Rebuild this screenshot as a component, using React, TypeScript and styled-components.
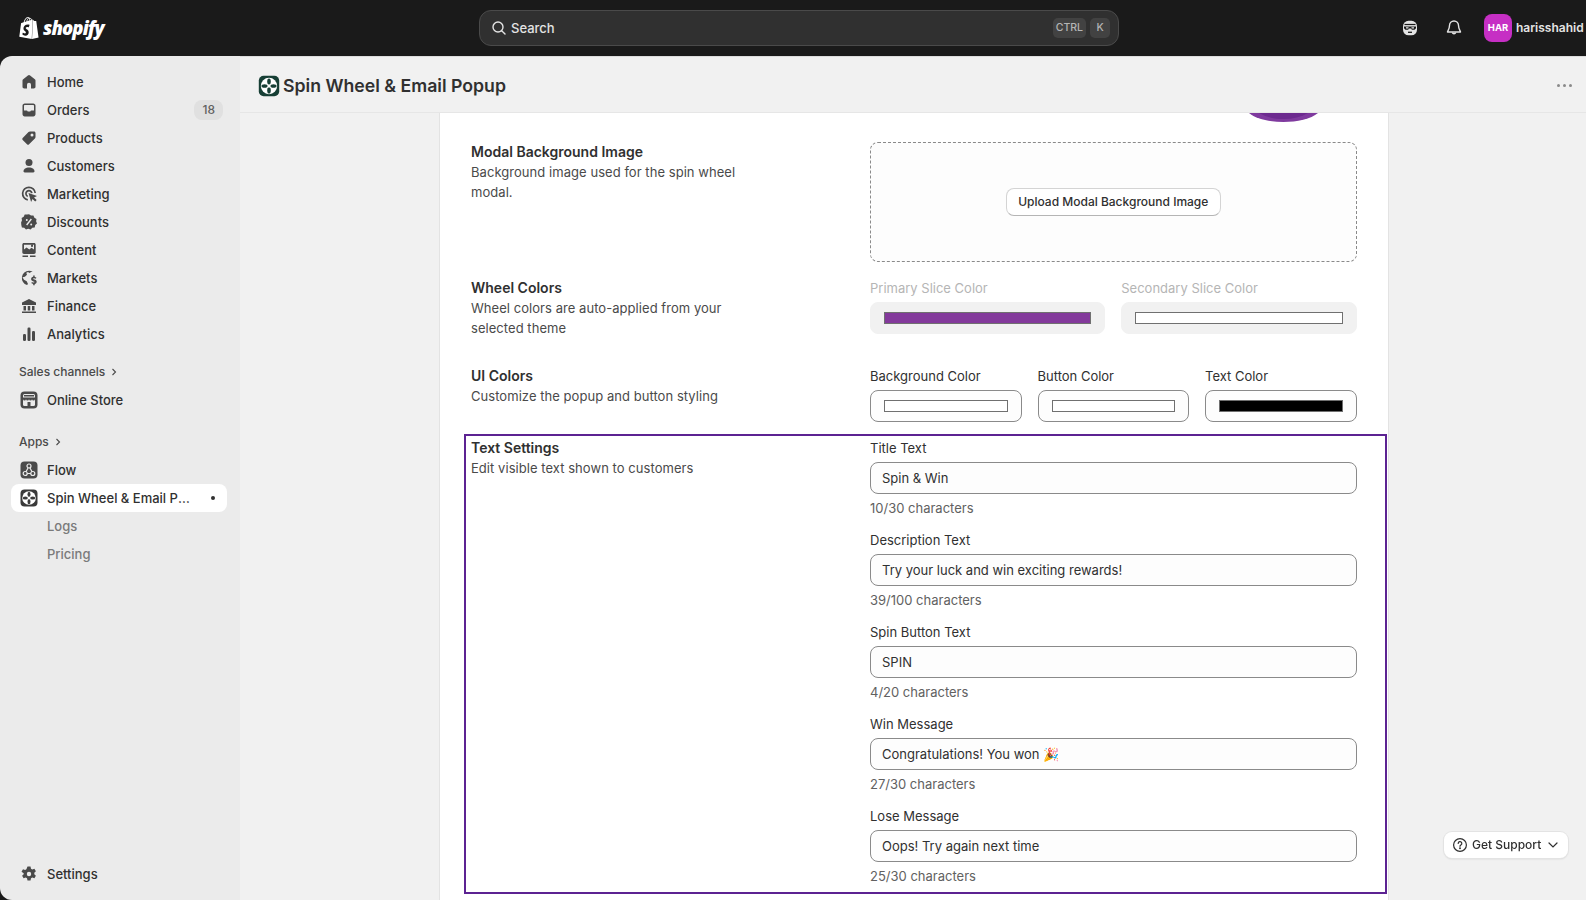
import React from 'react'
import styled, { createGlobalStyle } from 'styled-components'
import { SiShopify } from 'react-icons/si'

const GlobalStyle = createGlobalStyle`
  html, body {
    margin: 0;
    height: 100%;
    background: #1a1a1a;
    overflow: hidden;
  }
  * { box-sizing: border-box; }
  body {
    font-family: Inter, "Liberation Sans", sans-serif;
    font-size: 13px;
    line-height: 20px;
    color: #303030;
  }
`

const Frame = styled.div`
  width: 1586px;
  height: 900px;
  display: flex;
  flex-direction: column;
  overflow: hidden;
`

/* top bar */
const TopBar = styled.header`
  height: 56px;
  flex: none;
  display: flex;
  align-items: center;
  background: #1a1a1a;
`

const LogoBox = styled.div`
  width: 479px;
  flex: none;
  display: flex;
  align-items: center;
  gap: 3px;
  padding-left: 18px;
  color: #fff;
`

const Wordmark = styled.span`
  font-family: "Open Sans", sans-serif;
  font-style: italic;
  font-weight: 800;
  font-size: 18.5px;
  letter-spacing: -0.9px;
  color: #fff;
`

const SearchBox = styled.div`
  width: 640px;
  height: 36px;
  flex: none;
  display: flex;
  align-items: center;
  gap: 4px;
  padding: 0 8px 0 11px;
  background: #303030;
  border: 1px solid #4a4a4a;
  border-radius: 12px;
  color: #e3e3e3;
`

const SearchLabel = styled.span`
  flex: 1;
  font-size: 13px;
  font-weight: 450;
`

const Kbd = styled.span`
  height: 20px;
  min-width: 20px;
  padding: 0 3px;
  display: flex;
  align-items: center;
  justify-content: center;
  background: #424242;
  border-radius: 5px;
  color: #b5b5b5;
  font-size: 10.5px;
  font-weight: 500;
`

const TopRight = styled.div`
  flex: 1;
  display: flex;
  align-items: center;
  padding-left: 281px;
  color: #e3e3e3;
`

const TopIcon = styled.span<{ $gap: number }>`
  width: 20px;
  height: 20px;
  display: flex;
  margin-right: ${(p) => p.$gap}px;
`

const Avatar = styled.span`
  width: 28px;
  height: 28px;
  flex: none;
  display: flex;
  align-items: center;
  justify-content: center;
  background: #c62fc4;
  border-radius: 8px;
  color: #fff;
  font-size: 9.5px;
  font-weight: 700;
`

const UserName = styled.span`
  margin-left: 4px;
  font-size: 12px;
  font-weight: 600;
  white-space: nowrap;
  color: #e3e3e3;
`

/* shell */
const Body = styled.div`
  flex: 1;
  min-height: 0;
  display: flex;
`

const Sidebar = styled.nav`
  width: 240px;
  flex: none;
  display: flex;
  flex-direction: column;
  padding: 12px 13px 12px 11px;
  background: #ebebeb;
  border-radius: 12px 0 0 12px;
`

const NavRow = styled.div<{ $active?: boolean; $sub?: boolean }>`
  height: 28px;
  flex: none;
  display: flex;
  align-items: center;
  gap: 8px;
  padding: 0 4px 0 8px;
  border-radius: 8px;
  font-weight: ${(p) => (p.$active ? 550 : 500)};
  color: ${(p) => (p.$sub ? '#7a7a7a' : '#303030')};
  background: ${(p) => (p.$active ? '#fff' : 'transparent')};
`

const NavIcon = styled.span`
  width: 20px;
  height: 20px;
  flex: none;
  display: flex;
  color: #4a4a4a;
`

const NavLabel = styled.span<{ $sub?: boolean }>`
  flex: 1;
  min-width: 0;
  white-space: nowrap;
  overflow: hidden;
  text-overflow: ellipsis;
  padding-left: ${(p) => (p.$sub ? 28 : 0)}px;
`

const Badge = styled.span`
  height: 20px;
  padding: 0 8px;
  display: flex;
  align-items: center;
  background: #e0e0e0;
  border-radius: 8px;
  font-size: 12px;
  font-weight: 500;
  color: #616161;
`

const ActiveDot = styled.span`
  width: 4px;
  height: 4px;
  flex: none;
  margin: 0 8px 0 12px;
  border-radius: 50%;
  background: #303030;
`

const SectionHead = styled.div<{ $top: number }>`
  height: 24px;
  flex: none;
  margin: ${(p) => p.$top}px 0 2px;
  padding-left: 8px;
  display: flex;
  align-items: center;
  gap: 5px;
  font-size: 12px;
  font-weight: 500;
  color: #4a4a4a;
`

const SideSpacer = styled.div`
  flex: 1;
`

const Main = styled.main`
  flex: 1;
  min-width: 0;
  display: flex;
  flex-direction: column;
  background: #f1f1f1;
`

const TitleBar = styled.div`
  height: 57px;
  flex: none;
  display: flex;
  align-items: center;
  gap: 2px;
  padding: 3px 14px 0 17px;
  border-bottom: 1px solid #e6e6e6;
  box-shadow: inset 0 1px 0 #dcdcdc;
`

const PageTitle = styled.h1`
  flex: 1;
  margin: 0;
  font-size: 17.7px;
  line-height: 24px;
  font-weight: 600;
  color: #303030;
`

const TitleIcon = styled.span`
  width: 24px;
  height: 24px;
  display: flex;
`

const Dots = styled.span`
  display: flex;
  gap: 3px;
  span {
    width: 3px;
    height: 3px;
    border-radius: 50%;
    background: #8a8a8a;
  }
`

const Scroll = styled.div`
  flex: 1;
  min-height: 0;
  overflow: hidden;
  padding-left: 199px;
`

const Card = styled.section`
  width: 950px;
  min-height: 100%;
  background: #fff;
  border-left: 1px solid #e3e3e3;
  border-right: 1px solid #e3e3e3;
`

const PreviewEdge = styled.div`
  height: 29px;
  display: flex;
  justify-content: flex-end;
  padding-right: 70px;
`

const Row = styled.div<{ $height?: number; $after: number }>`
  display: grid;
  grid-template-columns: 399px 486.5px;
  padding: 0 31px;
  height: ${(p) => (p.$height ? `${p.$height}px` : 'auto')};
  margin-bottom: ${(p) => p.$after}px;
`

const HighlightRow = styled.div`
  display: grid;
  grid-template-columns: 399px 486.5px;
  height: 460px;
  margin: 0 1px 0 24px;
  padding: 2px 0 0 5px;
  border: 2px solid #5c2392;
`

const SideText = styled.div`
  display: flex;
  flex-direction: column;
`

const RowTitle = styled.div`
  font-size: 14px;
  font-weight: 600;
  color: #303030;
`

const RowDesc = styled.div`
  max-width: 290px;
  color: #4a4a4a;
  letter-spacing: 0.05px;
`

const DropZone = styled.div`
  height: 120px;
  display: flex;
  align-items: center;
  justify-content: center;
  background: #fdfdfd;
  border: 1px dashed #8a8a8a;
  border-radius: 8px;
`

const Button = styled.button`
  height: 28px;
  padding: 0 11.5px 2px;
  background: #fff;
  border: 1px solid #d4d4d4;
  border-bottom-color: #b5b5b5;
  border-radius: 8px;
  font-family: inherit;
  font-size: 12px;
  font-weight: 550;
  color: #303030;
`

const SwatchGrid = styled.div<{ $cols: number }>`
  display: grid;
  grid-template-columns: repeat(${(p) => p.$cols}, 1fr);
  gap: 16px;
`

const FieldLabel = styled.div<{ $off?: boolean }>`
  margin-bottom: 4px;
  color: ${(p) => (p.$off ? '#b5b5b5' : '#303030')};
`

const SwatchBox = styled.div<{ $off?: boolean }>`
  height: 32px;
  padding: 0 13px;
  display: flex;
  align-items: center;
  background: ${(p) => (p.$off ? '#f1f1f1' : '#fdfdfd')};
  border: 1px solid ${(p) => (p.$off ? '#f1f1f1' : '#8a8a8a')};
  border-radius: 8px;
`

const Swatch = styled.div<{ $color: string }>`
  flex: 1;
  height: 12px;
  background: ${(p) => p.$color};
  border: 1px solid #707070;
`

const FieldStack = styled.div`
  display: flex;
  flex-direction: column;
  gap: 12px;
`

const TextInput = styled.input`
  display: block;
  width: 100%;
  height: 32px;
  padding: 0 11px;
  background: #fdfdfd;
  border: 1px solid #8a8a8a;
  border-radius: 8px;
  outline: none;
  font-family: Inter, "Noto Color Emoji", sans-serif;
  font-size: 13px;
  color: #303030;
`

const Helper = styled.div`
  margin-top: 4px;
  color: #616161;
`

const Support = styled.div`
  position: fixed;
  left: 1444px;
  top: 832px;
  width: 124px;
  height: 26px;
  display: flex;
  align-items: center;
  gap: 4px;
  padding: 0 8px;
  background: #fff;
  border-radius: 8px;
  box-shadow: 0 0 0 1px #e3e3e3, 0 1px 2px rgba(0, 0, 0, 0.15);
  font-size: 12px;
  font-weight: 550;
  color: #303030;
  white-space: nowrap;
`

const SupportLabel = styled.span`
  margin-right: 2px;
`

/* icons */
const Svg = ({ children, size = 20 }: { children: React.ReactNode; size?: number }) => (
  <svg width={size} height={size} viewBox="0 0 20 20" fill="currentColor">
    {children}
  </svg>
)

const HomeIcon = () => (
  <Svg><path d="M11.1 3.5a1.8 1.8 0 0 0-2.2 0L4.2 7.2A1.8 1.8 0 0 0 3.5 8.6v6.2c0 1 .8 1.7 1.7 1.7H8v-3.7a2 2 0 0 1 4 0v3.7h2.8c1 0 1.7-.8 1.7-1.7V8.6c0-.6-.3-1-.7-1.4z" /></Svg>
)
const OrdersIcon = () => (
  <Svg><path fillRule="evenodd" d="M5.7 3.5h8.6c1.2 0 2.2 1 2.2 2.2v8.6c0 1.2-1 2.2-2.2 2.2H5.7c-1.2 0-2.2-1-2.2-2.2V5.7c0-1.2 1-2.2 2.2-2.2zM5 10.500h2.600c.5 0 .9.3 1 .8l.1.2h2.600l.1-.2c.1-.5.5-.8 1-.8H15V5.700c0-.4-.3-.7-.7-.7H5.700c-.4 0-.7.3-.7.7z" /></Svg>
)
const ProductsIcon = () => (
  <Svg><path fillRule="evenodd" d="M11 3.500h4c.8 0 1.500.7 1.500 1.500v4c0 .6-.2 1.100-.6 1.500l-5.800 5.800a1.500 1.500 0 0 1-2.100 0l-4.300-4.300a1.500 1.500 0 0 1 0-2.100L9.500 4.100c.4-.4.9-.6 1.500-.6zm2 5a1.500 1.500 0 1 0 0-3 1.500 1.500 0 0 0 0 3z" /></Svg>
)
const CustomersIcon = () => (
  <Svg><circle cx="10" cy="6.500" r="3.500" /><path d="M10 11.500c-3.300 0-5.500 1.700-5.500 3.800 0 .7.500 1.200 1.200 1.200h8.600c.7 0 1.200-.5 1.200-1.200 0-2.100-2.200-3.800-5.500-3.800z" /></Svg>
)
const MarketingIcon = () => (
  <Svg>
    <g fill="none" stroke="currentColor" strokeWidth="1.700">
      <path d="M8.800 15.800A6.300 6.300 0 1 1 16.200 9" />
      <path d="M8.700 12.400A3 3 0 1 1 12.900 9.200" />
    </g>
    <path d="M9.500 9l8.500 3-3 1.400 2.700 2.700-1.500 1.500-2.700-2.700-1.400 3z" />
  </Svg>
)
const DiscountsIcon = () => (
  <Svg><path fillRule="evenodd" d="M10 2.300l2 1.300 2.400-.1 1 2.200 2.100 1.200-.4 2.400.9 2.200-1.800 1.600-.5 2.300-2.400.3-1.700 1.700-2.400-.6-2.200.6-1.800-1.700-2.300-.3-.6-2.300L2.100 10.500l.9-2.300-.4-2.300 2.100-1.200 1-2.200 2.300.1zM7.800 9a1 1 0 1 0 0-2 1 1 0 0 0 0 2zm4.400 4.400a1 1 0 1 0 0-2 1 1 0 0 0 0 2zM12.900 7.600l-1.100-1-4.700 6 1.100.9z" /></Svg>
)
const ContentIcon = () => (
  <Svg><path fillRule="evenodd" d="M5 3h10c1 0 1.700.7 1.700 1.700v7.600c0 1-.7 1.700-1.700 1.700H5c-1 0-1.700-.7-1.700-1.700V4.700C3.300 3.700 4 3 5 3zM5 4.800v4.700l2.500-2 2.800 2 2.200-1.800 2.500 1.800V4.800zm7.700 2.100a1.100 1.100 0 1 0 0-2.100 1.100 1.100 0 0 0 0 2.100zM3.500 15.500H9V17H3.500zm7.500 0h5.500V17H11z" /></Svg>
)
const MarketsIcon = () => (
  <Svg>
    <path d="M10 2.800a7.200 7.200 0 0 0-2 14.100l1-1-1.300-2.600-2.700-1.500-1.500-2.500 2.400-.6L8 6.800 7.300 4.700l1.700-.7 1.500 1 1.600-1 1.600-.2A7.200 7.200 0 0 0 10 2.800z" />
    <path d="M14.200 7.500v1.300c-1.300.3-2.100 1.100-2.100 2.300 0 1.400 1 1.900 2.300 2.300.8.200 1.200.4 1.200.7s-.4.500-1 .5-1-.2-1.500-.6l-.9 1.100c.5.500 1.200.8 2 .9v1.200h1.500v-1.200c1.300-.3 2-1.200 2-2.300 0-1.400-1-2-2.300-2.300-.9-.2-1.200-.4-1.200-.7s.4-.4 1-.4c.5 0 1 .2 1.400.5l.9-1.100c-.5-.4-1.100-.7-1.800-.8V7.500z" />
  </Svg>
)
const FinanceIcon = () => (
  <Svg><path d="M10 3l7 3.500V9H3V6.500zM4.500 10H7v4.500H4.500zm4.250 0h2.500v4.500h-2.500zM13 10h2.500v4.500H13zM3 15.500h14V17H3z" /></Svg>
)
const AnalyticsIcon = () => (
  <Svg><rect x="4" y="10" width="3" height="7" rx="1.200" /><rect x="8.500" y="3.500" width="3" height="13.500" rx="1.200" /><rect x="13" y="7" width="3" height="10" rx="1.200" /></Svg>
)
const StoreTile = () => (
  <Svg>
    <rect x="1.500" y="1.500" width="17" height="17" rx="4" fill="#4a4a4a" />
    <rect x="4" y="4" width="12" height="12" rx="1.500" fill="#ebebeb" />
    <path d="M4 7.500h12V9a1.500 1.500 0 0 1-3 0 1.500 1.500 0 0 1-3 0 1.500 1.500 0 0 1-3 0 1.500 1.500 0 0 1-3 0zM8.500 12h3v4h-3zM5 5h10v1.500H5z" fill="#4a4a4a" />
  </Svg>
)
const FlowTile = () => (
  <Svg>
    <rect x="1.500" y="1.500" width="17" height="17" rx="4" fill="#4a4a4a" />
    <g fill="none" stroke="#ebebeb" strokeWidth="1.200">
      <circle cx="10" cy="6" r="2" />
      <circle cx="6.200" cy="13.500" r="2" />
      <circle cx="13.800" cy="13.500" r="2" />
      <path d="M9 8l-2 3.800M11 8l2 3.800M8.200 13.500h3.600" />
    </g>
  </Svg>
)
const WheelTile = ({ bg, size }: { bg: string; size?: number }) => (
  <Svg size={size}>
    <rect x="1.500" y="1.500" width="17" height="17" rx="4" fill={bg} />
    <circle cx="10" cy="10" r="6.800" fill="#fff" />
    <g fill={bg}>
      <ellipse cx="10" cy="6.300" rx="1.500" ry="2.600" />
      <ellipse cx="10" cy="13.700" rx="1.500" ry="2.600" />
      <ellipse cx="6.300" cy="10" rx="2.600" ry="1.500" />
      <ellipse cx="13.700" cy="10" rx="2.600" ry="1.500" />
    </g>
    <circle cx="10" cy="10" r="1.200" fill="#fff" />
  </Svg>
)
const GearIcon = () => (
  <Svg><path fillRule="evenodd" d="M8.500 2.500h3l.5 2.200 1.300.7 2.100-.7 1.500 2.600-1.600 1.500v1.400l1.600 1.500-1.500 2.600-2.100-.7-1.300.7-.5 2.200h-3l-.5-2.200-1.300-.7-2.100.7-1.500-2.600 1.600-1.500V9.300L2.500 7.800 4 5.200l2.100.7 1.300-.7zM10 12.200a2.200 2.200 0 1 0 0-4.400 2.200 2.200 0 0 0 0 4.400z" /></Svg>
)
const Chevron = () => (
  <svg width="8" height="8" viewBox="0 0 8 8" fill="none" stroke="#4a4a4a" strokeWidth="1.100">
    <path d="M2.500 1l3 3-3 3" />
  </svg>
)
const SearchIcon = () => (
  <svg width="16" height="16" viewBox="0 0 16 16" fill="none" stroke="#e3e3e3" strokeWidth="1.400" strokeLinecap="round">
    <circle cx="7" cy="7" r="5" />
    <path d="M10.700 10.700L14 14" />
  </svg>
)
const SidekickIcon = () => (
  <svg width="20" height="20" viewBox="0 0 20 20">
    <rect x="3" y="2.800" width="14" height="14.500" rx="5.500" fill="#e3e3e3" />
    <path d="M4.500 6.500h11" stroke="#1a1a1a" strokeWidth="1.200" />
    <path d="M4 8.500h12v1.800l-1.500 1.400h-2.500L10.800 10.500H9.200L8 11.700H5.500L4 10.300z" fill="#1a1a1a" />
    <path d="M6 9.200h2.500v1.200H6zM11.500 9.200H14v1.200h-2.500z" fill="#e3e3e3" />
    <path d="M8 14.300h4" stroke="#1a1a1a" strokeWidth="1.300" />
  </svg>
)
const BellIcon = () => (
  <svg width="20" height="20" viewBox="0 0 20 20" fill="none" stroke="#e3e3e3" strokeWidth="1.400" strokeLinejoin="round">
    <path d="M10 3a4.500 4.500 0 0 0-4.500 4.500c0 3.500-2 5.500-2 6.500h13c0-1-2-3-2-6.500A4.500 4.500 0 0 0 10 3z" />
    <path d="M8.300 14.500a1.800 1.800 0 0 0 3.400 0" />
  </svg>
)
const HelpIcon = () => (
  <svg width="16" height="16" viewBox="0 0 16 16" fill="none" stroke="#303030" strokeWidth="1.200" strokeLinecap="round">
    <circle cx="8" cy="8" r="6.400" />
    <path d="M6.200 6.400a1.800 1.800 0 1 1 2.700 1.500c-.6.400-.9.700-.9 1.400" />
    <circle cx="8" cy="11.300" r=".4" fill="#303030" />
  </svg>
)
const ChevronDown = () => (
  <svg width="12" height="12" viewBox="0 0 12 12" fill="none" stroke="#303030" strokeWidth="1.200" strokeLinecap="round">
    <path d="M2 4l4 4 4-4" />
  </svg>
)

const navItems = [
  { label: 'Home', icon: <HomeIcon /> },
  { label: 'Orders', icon: <OrdersIcon />, badge: '18' },
  { label: 'Products', icon: <ProductsIcon /> },
  { label: 'Customers', icon: <CustomersIcon /> },
  { label: 'Marketing', icon: <MarketingIcon /> },
  { label: 'Discounts', icon: <DiscountsIcon /> },
  { label: 'Content', icon: <ContentIcon /> },
  { label: 'Markets', icon: <MarketsIcon /> },
  { label: 'Finance', icon: <FinanceIcon /> },
  { label: 'Analytics', icon: <AnalyticsIcon /> },
]

const textFields = [
  { label: 'Title Text', value: 'Spin & Win', help: '10/30 characters' },
  { label: 'Description Text', value: 'Try your luck and win exciting rewards!', help: '39/100 characters' },
  { label: 'Spin Button Text', value: 'SPIN', help: '4/20 characters' },
  { label: 'Win Message', value: 'Congratulations! You won \u{1F389}', help: '27/30 characters' },
  { label: 'Lose Message', value: 'Oops! Try again next time', help: '25/30 characters' },
]

export default function App() {
  return (
    <Frame>
      <GlobalStyle />
      <TopBar>
        <LogoBox>
          <SiShopify size={22} />
          <Wordmark>shopify</Wordmark>
        </LogoBox>
        <SearchBox>
          <SearchIcon />
          <SearchLabel>Search</SearchLabel>
          <Kbd>CTRL</Kbd>
          <Kbd>K</Kbd>
        </SearchBox>
        <TopRight>
          <TopIcon $gap={24}><SidekickIcon /></TopIcon>
          <TopIcon $gap={20}><BellIcon /></TopIcon>
          <Avatar>HAR</Avatar>
          <UserName>harisshahid</UserName>
        </TopRight>
      </TopBar>
      <Body>
        <Sidebar>
          {navItems.map((item) => (
            <NavRow key={item.label}>
              <NavIcon>{item.icon}</NavIcon>
              <NavLabel>{item.label}</NavLabel>
              {item.badge && <Badge>{item.badge}</Badge>}
            </NavRow>
          ))}
          <SectionHead $top={12}>Sales channels <Chevron /></SectionHead>
          <NavRow>
            <NavIcon><StoreTile /></NavIcon>
            <NavLabel>Online Store</NavLabel>
          </NavRow>
          <SectionHead $top={16}>Apps <Chevron /></SectionHead>
          <NavRow>
            <NavIcon><FlowTile /></NavIcon>
            <NavLabel>Flow</NavLabel>
          </NavRow>
          <NavRow $active>
            <NavIcon><WheelTile bg="#3a3a3a" /></NavIcon>
            <NavLabel>Spin Wheel &amp; Email Popup</NavLabel>
            <ActiveDot />
          </NavRow>
          <NavRow $sub><NavLabel $sub>Logs</NavLabel></NavRow>
          <NavRow $sub><NavLabel $sub>Pricing</NavLabel></NavRow>
          <SideSpacer />
          <NavRow>
            <NavIcon><GearIcon /></NavIcon>
            <NavLabel>Settings</NavLabel>
          </NavRow>
        </Sidebar>
        <Main>
          <TitleBar>
            <TitleIcon><WheelTile bg="#173f35" size={24} /></TitleIcon>
            <PageTitle>Spin Wheel &amp; Email Popup</PageTitle>
            <Dots><span /><span /><span /></Dots>
          </TitleBar>
          <Scroll>
            <Card>
              <PreviewEdge>
                <svg width="69" height="9" viewBox="0 0 69 9">
                  <path d="M0 0h69C62 6 48 9 34.500 9S7 6 0 0z" fill="#7f3a9e" />
                  <path d="M10 0h49C52 4 44 6 34.500 6S17 4 10 0z" fill="#6d2a8f" />
                </svg>
              </PreviewEdge>
              <Row $height={120} $after={16}>
                <SideText>
                  <RowTitle>Modal Background Image</RowTitle>
                  <RowDesc>Background image used for the spin wheel modal.</RowDesc>
                </SideText>
                <DropZone>
                  <Button>Upload Modal Background Image</Button>
                </DropZone>
              </Row>
              <Row $height={60} $after={28}>
                <SideText>
                  <RowTitle>Wheel Colors</RowTitle>
                  <RowDesc>Wheel colors are auto-applied from your selected theme</RowDesc>
                </SideText>
                <SwatchGrid $cols={2}>
                  <div>
                    <FieldLabel $off>Primary Slice Color</FieldLabel>
                    <SwatchBox $off><Swatch $color="#83399b" /></SwatchBox>
                  </div>
                  <div>
                    <FieldLabel $off>Secondary Slice Color</FieldLabel>
                    <SwatchBox $off><Swatch $color="#ffffff" /></SwatchBox>
                  </div>
                </SwatchGrid>
              </Row>
              <Row $height={56} $after={12}>
                <SideText>
                  <RowTitle>UI Colors</RowTitle>
                  <RowDesc>Customize the popup and button styling</RowDesc>
                </SideText>
                <SwatchGrid $cols={3}>
                  <div>
                    <FieldLabel>Background Color</FieldLabel>
                    <SwatchBox><Swatch $color="#ffffff" /></SwatchBox>
                  </div>
                  <div>
                    <FieldLabel>Button Color</FieldLabel>
                    <SwatchBox><Swatch $color="#ffffff" /></SwatchBox>
                  </div>
                  <div>
                    <FieldLabel>Text Color</FieldLabel>
                    <SwatchBox><Swatch $color="#000000" /></SwatchBox>
                  </div>
                </SwatchGrid>
              </Row>
              <HighlightRow>
                <SideText>
                  <RowTitle>Text Settings</RowTitle>
                  <RowDesc>Edit visible text shown to customers</RowDesc>
                </SideText>
                <FieldStack>
                  {textFields.map((field) => (
                    <div key={field.label}>
                      <FieldLabel>{field.label}</FieldLabel>
                      <TextInput readOnly value={field.value} />
                      <Helper>{field.help}</Helper>
                    </div>
                  ))}
                </FieldStack>
              </HighlightRow>
            </Card>
          </Scroll>
        </Main>
      </Body>
      <Support>
        <HelpIcon />
        <SupportLabel>Get Support</SupportLabel>
        <ChevronDown />
      </Support>
    </Frame>
  )
}
